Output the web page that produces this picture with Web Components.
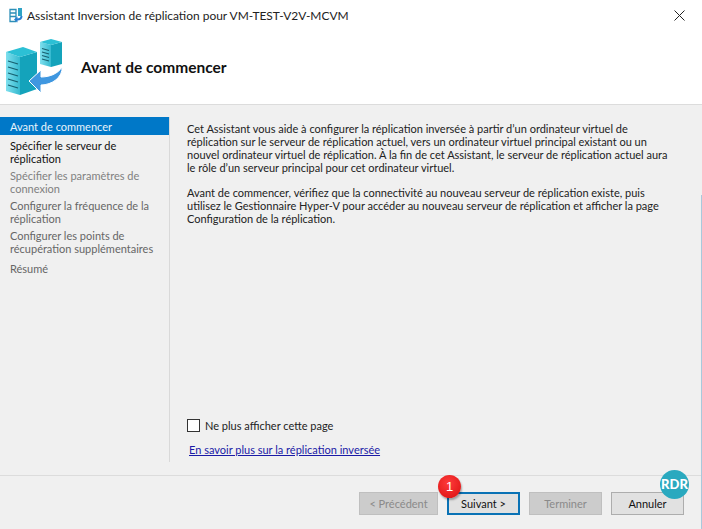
<!DOCTYPE html>
<html lang="fr"><head><meta charset="utf-8"><style>
html,body{margin:0;padding:0;background:#f0f0f0}
body{width:702px;height:529px;overflow:hidden;font-family:Lato,"Open Sans",sans-serif;font-size:11px;color:#1a1a1a}
</style></head><body>
<wizard-window>
  <span slot="title">Assistant Inversion de réplication pour VM-TEST-V2V-MCVM</span>
  <span slot="heading">Avant de commencer</span>
  <wizard-nav slot="nav">
    <nav-item state="selected">Avant de commencer</nav-item>
    <nav-item state="active">Spécifier le serveur de<br>réplication</nav-item>
    <nav-item state="pale">Spécifier les paramètres de<br>connexion</nav-item>
    <nav-item>Configurer la fréquence de la<br>réplication</nav-item>
    <nav-item>Configurer les points de<br>récupération supplémentaires</nav-item>
    <nav-item class="last">Résumé</nav-item>
  </wizard-nav>
  <wizard-body slot="body">
    <p>Cet Assistant vous aide à configurer la réplication inversée à partir d’un ordinateur virtuel de<br>réplication sur le serveur de réplication actuel, vers un ordinateur virtuel principal existant ou un<br>nouvel ordinateur virtuel de réplication. À la fin de cet Assistant, le serveur de réplication actuel aura<br>le rôle d’un serveur principal pour cet ordinateur virtuel.</p>
    <p>Avant de commencer, vérifiez que la connectivité au nouveau serveur de réplication existe, puis<br>utilisez le Gestionnaire Hyper-V pour accéder au nouveau serveur de réplication et afficher la page<br>Configuration de la réplication.</p>
  </wizard-body>
  <wizard-button slot="buttons" disabled wide>&lt; Précédent</wizard-button>
  <wizard-button slot="buttons" focused badge="1">Suivant &gt;</wizard-button>
  <wizard-button slot="buttons" disabled>Terminer</wizard-button>
  <wizard-button slot="buttons">Annuler</wizard-button>
</wizard-window>
<script>
const def=(name,html,extra)=>{customElements.define(name,class extends HTMLElement{
  constructor(){super();this.attachShadow({mode:'open'}).innerHTML=html;}
  connectedCallback(){extra&&extra.call(this);}
});};

def('wizard-window',`<style>
:host{display:flex;flex-direction:column;width:702px;height:529px;position:relative;box-sizing:border-box}
.top{background:#fff;height:104px;border-bottom:1px solid #dcdcdc;display:flex;flex-direction:column;flex:none}
.titlebar{height:30px;flex:none;display:flex;align-items:center;gap:4px;padding-left:9px;font-size:11.95px;color:#222}
.titlebar .t{flex:1}
.close{width:46px;height:30px;display:flex;align-items:center;justify-content:center}
.hero{flex:1;display:flex;align-items:center;padding-left:5px;gap:18px}
.hero .h{font-size:15.5px;font-weight:700;color:#111}
.main{flex:1;display:flex;min-height:0}
.nav{width:169px;flex:none;margin:12px 0 13px;border-right:1px solid #d9d9d9}
.content{flex:1;padding:17px 16px 0 17px;display:flex;flex-direction:column}
.grow{flex:1}
.check{display:flex;align-items:center;gap:5px;color:#222;height:14px}
.box{width:11px;height:11px;border:1px solid #333;background:#fff;flex:none}
.link{color:#1a1aa6;text-decoration:underline;margin:10px 0 17px 2px;line-height:16px}
.foot{height:54px;flex:none;border-top:1px solid #dcdcdc;display:flex;justify-content:flex-end;align-items:flex-start;padding:16px 18px 0 0;gap:9px;box-sizing:border-box}
.rdr{position:absolute;left:660px;top:470px;width:29px;height:29px;border-radius:50%;background:#2aa9bf;color:#fff;font:900 13px/29px Lato,sans-serif;text-align:center;overflow:hidden;white-space:nowrap}
.edge{position:absolute;left:701px;top:195px;width:1px;height:334px;background:#a9c9dc}
</style>
<div class="top">
  <div class="titlebar">
    <svg width="14" height="16" viewBox="0 0 14 16"><path d="M1 2.500h6v12H1zM1 6h6M1 9.500h6" fill="#fff" stroke="#2d8fb8" stroke-width="1.3"/><rect x="9" y="1" width="4" height="8" fill="#2fa3c6"/><path d="M12.500 9c0 2.500-2 3.500-4.500 3.500" fill="none" stroke="#2a7fd0" stroke-width="2"/><path d="M5 12.500l3.500-3v6z" fill="#2a7fd0"/></svg>
    <span class="t"><slot name="title"></slot></span>
    <span class="close"><svg width="11" height="11" viewBox="0 0 11 11"><path d="M.5.500l10 10M10.500.500l-10 10" stroke="#222" stroke-width="1"/></svg></span>
  </div>
  <div class="hero">
    <svg width="58" height="60" viewBox="0 0 58 60" style="flex:none">
      <defs><linearGradient id="f" x1="0" x2="1"><stop offset="0" stop-color="#7fe0ee"/><stop offset="1" stop-color="#35b9cf"/></linearGradient></defs>
      <path d="M35 5l11 3v22l-11-3z" fill="url(#f)"/>
      <path d="M46 8l11-3v22l-11 3z" fill="#14a3bb"/>
      <path d="M35 5l11-3 11 3-11 3z" fill="#2cc0d5"/>
      <path d="M37 11.500l7 2M37 15l7 2M37 18.500l7 2M37 22l7 2" stroke="#17606f" stroke-width="1.2"/>
      <path d="M1 15l14 5v38l-14-4z" fill="url(#f)"/>
      <path d="M15 20l17-5v37l-17 6z" fill="#14a3bb"/>
      <path d="M1 15l17-5 14 5-17 5z" fill="#2cc0d5"/>
      <path d="M3 24l10 3M3 30l10 3M3 36l10 3M3 42l10 3M3 48l10 3" stroke="#17606f" stroke-width="1.3"/>
      <path d="M57 30c1 10-10 18-21 18v8L24 44l12-11v7c8 0 17-3 21-10z" fill="#3f97e0" stroke="#fff" stroke-width="1"/>
    </svg>
    <span class="h"><slot name="heading"></slot></span>
  </div>
</div>
<div class="main">
  <div class="nav"><slot name="nav"></slot></div>
  <div class="content">
    <slot name="body"></slot>
    <div class="grow"></div>
    <div class="check"><span class="box"></span><span>Ne plus afficher cette page</span></div>
    <div class="link">En savoir plus sur la réplication inversée</div>
  </div>
</div>
<div class="foot"><slot name="buttons"></slot></div>
<div class="rdr">RDR</div>
<div class="edge"></div>`);

def('wizard-nav',`<style>:host{display:flex;flex-direction:column}</style><slot></slot>`);

def('nav-item',`<style>
:host{display:block;padding:1px 0 0 10px;line-height:13px;margin-bottom:3px;color:#666}
:host([state=selected]){background:#0078c8;color:#e9f4fb;line-height:17px;padding:1px 0 0 10px;margin-bottom:3px}
:host([state=active]){color:#111}
:host([state=pale]){color:#808080}
:host(.last){margin-top:3px}
</style><slot></slot>`);

def('wizard-body',`<style>
:host{display:block;line-height:13px;color:#222}
::slotted(p){margin:0 0 12px}
</style><slot></slot>`);

def('wizard-button',`<style>
:host{display:block;position:relative;width:73px;height:23px;box-sizing:border-box;background:#e1e1e1;border:1px solid #adadad;color:#111;text-align:center;line-height:21px}
:host([wide]){width:79px}
:host([disabled]){background:#cccccc;border-color:#bfbfbf;color:#8a8a8a}
:host([focused]){border:2px solid #0a72b5;line-height:19px}
.badge{position:absolute;left:-11px;top:-19px;width:23px;height:23px;border-radius:50%;background:radial-gradient(circle at 45% 35%,#ff3b3b,#d80f0f);color:#fff;font:13px/23px "Liberation Sans",sans-serif;text-align:center;box-shadow:1px 2px 2px rgba(0,0,0,.3)}
</style><slot></slot>`,function(){
  const b=this.getAttribute('badge');
  if(b&&!this.shadowRoot.querySelector('.badge')){const s=document.createElement('span');s.className='badge';s.textContent=b;this.shadowRoot.appendChild(s);}
});
</script>
</body></html>
